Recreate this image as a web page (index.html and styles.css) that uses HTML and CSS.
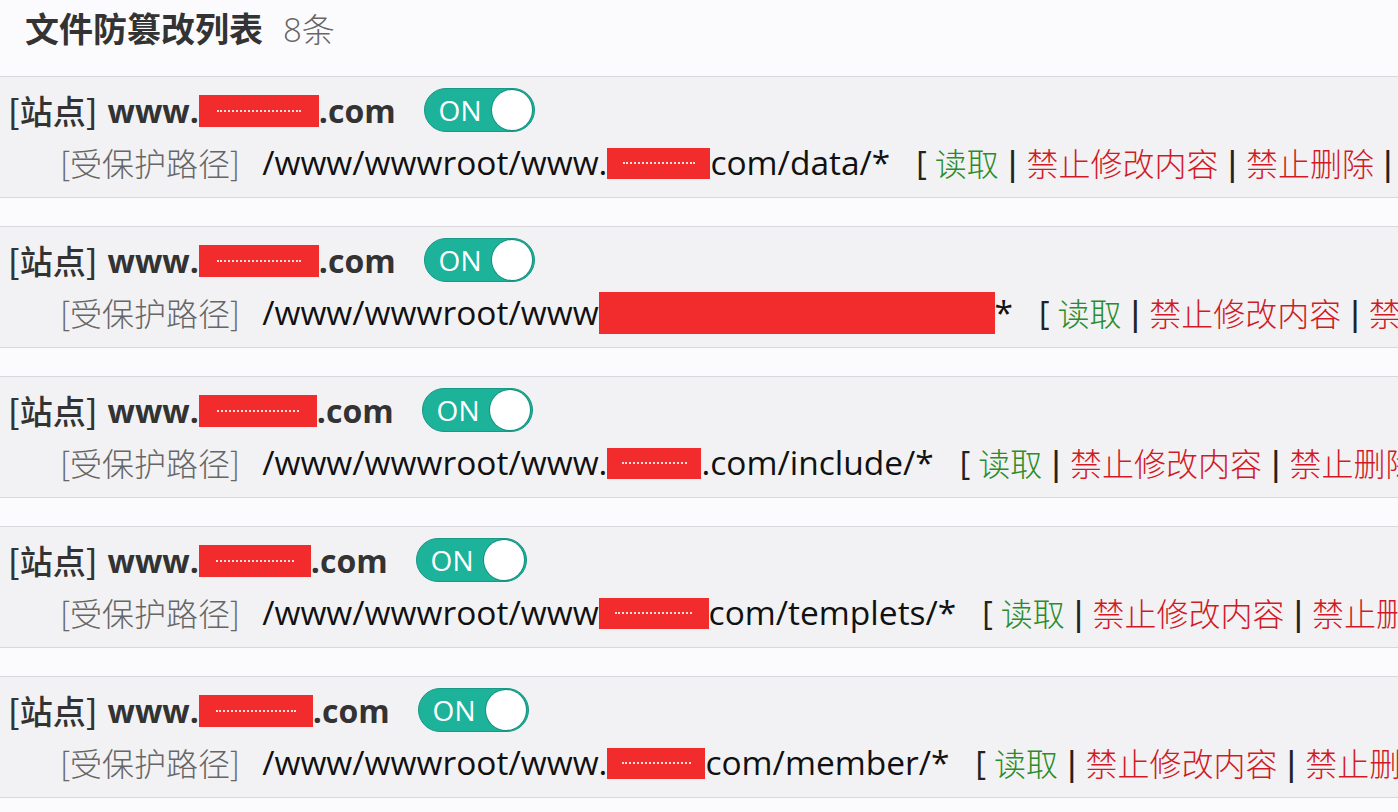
FILE: index.html
```html
<!DOCTYPE html>
<html lang="zh-CN">
<head>
<meta charset="utf-8">
<title>文件防篡改列表</title>
<link rel="stylesheet" href="styles.css">
</head>
<body>
<div class="page">
  <div class="header">
    <span class="title">文件防篡改列表</span>
    <span class="count">8条</span>
  </div>

  <div class="item">
    <div class="site-row">
      <span class="site-label">[站点]</span>
      <span class="site-name">www.<span class="redact r-site" style="width:120px"><i></i></span>.com</span>
      <span class="toggle"><span class="toggle-text">ON</span><span class="knob"></span></span>
    </div>
    <div class="path-row">
      <span class="path-label">[受保护路径]</span>
      <span class="path">/www/wwwroot/www.<span class="redact r-path" style="width:103px"><i></i></span>com/data/*</span>
      <span class="actions"><span class="br">[</span><span class="ok">读取</span><span class="sep">|</span><span class="deny">禁止修改内容</span><span class="sep">|</span><span class="deny">禁止删除</span><span class="sep">|</span><span class="deny">禁止重命名</span><span class="br">]</span></span>
    </div>
  </div>

  <div class="item">
    <div class="site-row">
      <span class="site-label">[站点]</span>
      <span class="site-name">www.<span class="redact r-site" style="width:120px"><i></i></span>.com</span>
      <span class="toggle"><span class="toggle-text">ON</span><span class="knob"></span></span>
    </div>
    <div class="path-row">
      <span class="path-label">[受保护路径]</span>
      <span class="path">/www/wwwroot/www<span class="redact r-big" style="width:396px"></span>*</span>
      <span class="actions"><span class="br">[</span><span class="ok">读取</span><span class="sep">|</span><span class="deny">禁止修改内容</span><span class="sep">|</span><span class="deny">禁止删除</span><span class="sep">|</span><span class="deny">禁止重命名</span><span class="br">]</span></span>
    </div>
  </div>

  <div class="item">
    <div class="site-row">
      <span class="site-label">[站点]</span>
      <span class="site-name">www.<span class="redact r-site" style="width:118px"><i></i></span>.com</span>
      <span class="toggle"><span class="toggle-text">ON</span><span class="knob"></span></span>
    </div>
    <div class="path-row">
      <span class="path-label">[受保护路径]</span>
      <span class="path">/www/wwwroot/www.<span class="redact r-path" style="width:94px"><i></i></span>.com/include/*</span>
      <span class="actions"><span class="br">[</span><span class="ok">读取</span><span class="sep">|</span><span class="deny">禁止修改内容</span><span class="sep">|</span><span class="deny">禁止删除</span><span class="sep">|</span><span class="deny">禁止重命名</span><span class="br">]</span></span>
    </div>
  </div>

  <div class="item">
    <div class="site-row">
      <span class="site-label">[站点]</span>
      <span class="site-name">www.<span class="redact r-site" style="width:112px"><i></i></span>.com</span>
      <span class="toggle"><span class="toggle-text">ON</span><span class="knob"></span></span>
    </div>
    <div class="path-row">
      <span class="path-label">[受保护路径]</span>
      <span class="path">/www/wwwroot/www<span class="redact r-path" style="width:110px"><i></i></span>com/templets/*</span>
      <span class="actions"><span class="br">[</span><span class="ok">读取</span><span class="sep">|</span><span class="deny">禁止修改内容</span><span class="sep">|</span><span class="deny">禁止删除</span><span class="sep">|</span><span class="deny">禁止重命名</span><span class="br">]</span></span>
    </div>
  </div>

  <div class="item">
    <div class="site-row">
      <span class="site-label">[站点]</span>
      <span class="site-name">www.<span class="redact r-site" style="width:114px"><i></i></span>.com</span>
      <span class="toggle"><span class="toggle-text">ON</span><span class="knob"></span></span>
    </div>
    <div class="path-row">
      <span class="path-label">[受保护路径]</span>
      <span class="path">/www/wwwroot/www.<span class="redact r-path" style="width:98px"><i></i></span>com/member/*</span>
      <span class="actions"><span class="br">[</span><span class="ok">读取</span><span class="sep">|</span><span class="deny">禁止修改内容</span><span class="sep">|</span><span class="deny">禁止删除</span><span class="sep">|</span><span class="deny">禁止重命名</span><span class="br">]</span></span>
    </div>
  </div>
</div>
</body>
</html>
```

FILE: styles.css
```css
html, body {
  margin: 0;
  padding: 0;
}
body {
  background: #fbfbfd;
  font-family: "Open Sans", "Noto Sans CJK SC", sans-serif;
  color: #111;
  overflow: hidden;
  width: 1398px;
  height: 812px;
}
.page {
  width: 1398px;
  overflow: hidden;
  white-space: nowrap;
}
.header {
  height: 76px;
  padding-left: 25px;
  display: flex;
  align-items: baseline;
  gap: 20px;
  line-height: 56px;
  background: #fbfbfd;
}
.title {
  font-family: "Noto Sans CJK SC", sans-serif;
  font-size: 34px;
  font-weight: 700;
  color: #333;
}
.count {
  font-family: "Open Sans", "Noto Sans CJK SC", sans-serif;
  font-size: 33px;
  font-weight: 300;
  color: #666;
}
.item {
  height: 120px;
  background: #f2f2f4;
  border-top: 1px solid #d8d8dc;
  border-bottom: 1px solid #d8d8dc;
  margin-bottom: 28px;
}
.site-row {
  height: 44px;
  margin-top: 11px;
  padding-left: 8px;
  display: flex;
  align-items: center;
}
.site-label {
  font-family: "Noto Sans CJK SC", sans-serif;
  font-size: 33px;
  font-weight: 500;
  color: #333;
  margin-right: 10px;
}
.site-name {
  font-family: "Open Sans", sans-serif;
  font-size: 32px;
  font-weight: 700;
  color: #333;
  display: inline-flex;
  align-items: center;
}
.toggle {
  margin-left: 28px;
  width: 111px;
  height: 44px;
  border-radius: 22px;
  background: #1db29a;
  box-sizing: border-box;
  border: 1px solid #169985;
  display: flex;
  align-items: center;
  padding: 0 2px 0 14px;
  justify-content: space-between;
}
.toggle-text {
  font-family: "Open Sans", sans-serif;
  font-size: 28px;
  color: #fff;
  font-weight: 400;
}
.knob {
  width: 40px;
  height: 40px;
  border-radius: 50%;
  background: #fff;
  box-shadow: 0 0 0 1px #14907e;
}
.path-row {
  height: 40px;
  margin-top: 10px;
  padding-left: 60px;
  display: flex;
  align-items: center;
}
.path-label {
  font-family: "Noto Sans CJK SC", sans-serif;
  font-size: 32px;
  font-weight: 300;
  color: #666;
  margin-right: 22px;
}
.path {
  font-family: "Open Sans", sans-serif;
  font-size: 33.5px;
  font-weight: 400;
  color: #111;
  display: inline-flex;
  align-items: center;
  margin-right: 26px;
}
.actions {
  font-family: "Noto Sans CJK SC", sans-serif;
  font-size: 32px;
  font-weight: 300;
  color: #222;
  display: inline-flex;
  align-items: center;
}
.br {
  font-family: "Open Sans", sans-serif;
  font-weight: 400;
  color: #222;
  margin-right: 8px;
}
.br:last-child {
  margin-left: 8px;
  margin-right: 0;
}
.sep {
  font-family: "Open Sans", sans-serif;
  font-weight: 600;
  color: #222;
  margin: 0 5px;
}
.ok {
  color: #2a8c2a;
}
.deny {
  color: #d11a26;
}
.redact {
  display: inline-flex;
  align-items: center;
  justify-content: center;
  background: #f22c2c;
}
.redact i {
  display: block;
  width: 70%;
  border-top: 2px dotted rgba(255, 255, 255, 0.85);
}
.r-site {
  height: 32px;
  margin-top: 2px;
}
.r-path {
  height: 31px;
  margin-top: 2px;
}
.r-big {
  height: 42px;
  margin-top: 2px;
}
```
